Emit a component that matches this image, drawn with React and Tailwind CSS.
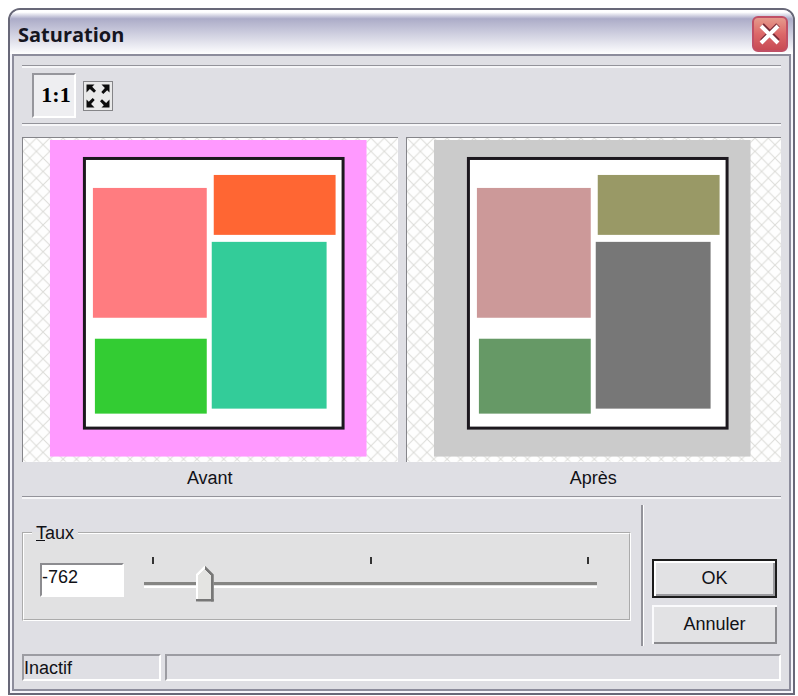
import React, { useState } from 'react';

const MIN_RATE = -1000;
const MAX_RATE = 1000;

const previews = [
  {
    label: 'Avant',
    colors: {
      page: '#ff99ff',
      topLeft: '#ff7c80',
      topRight: '#ff6633',
      bottomRight: '#33cc99',
      bottomLeft: '#33cc33',
    },
  },
  {
    label: 'Après',
    colors: {
      page: '#cbcbcb',
      topLeft: '#cc9999',
      topRight: '#999966',
      bottomRight: '#777777',
      bottomLeft: '#669966',
    },
  },
];

function Preview({ label, colors }) {
  const patternId = `hatch-${label}`;

  return (
    <figure className="min-w-0 flex-1">
      <div className="border-t border-l border-[#85858a] bg-white">
        <svg viewBox="0 0 375 324" className="block h-auto w-full" role="img" aria-label={label}>
          <defs>
            <pattern id={patternId} width="13.4" height="13.4" patternUnits="userSpaceOnUse">
              <path d="M0 0L13.4 13.4M13.4 0L0 13.4" stroke="#dcdcd8" strokeWidth="1" />
            </pattern>
          </defs>
          <rect width="375" height="324" fill="#fefefe" />
          <rect width="375" height="324" fill={`url(#${patternId})`} />
          <rect x="27" y="2" width="317" height="317" fill={colors.page} />
          <rect x="61.5" y="20.5" width="259" height="270" fill="#fff" stroke="#1c181e" strokeWidth="3" />
          <rect x="70" y="50" width="114" height="130" fill={colors.topLeft} />
          <rect x="191" y="37" width="122" height="60" fill={colors.topRight} />
          <rect x="189" y="104" width="115" height="167" fill={colors.bottomRight} />
          <rect x="72" y="201" width="112" height="75" fill={colors.bottomLeft} />
        </svg>
      </div>
      <figcaption className="pt-1 text-center leading-6">{label}</figcaption>
    </figure>
  );
}

function Rule() {
  return <div className="h-[3px] border-t border-[#93939a] bg-[#f6f6f8]" />;
}

export default function App() {
  const [rate, setRate] = useState(-762);
  const [actualSize, setActualSize] = useState(true);

  const handleTextChange = (e) => {
    const value = Number(e.target.value);
    if (!Number.isNaN(value)) {
      setRate(Math.max(MIN_RATE, Math.min(MAX_RATE, value)));
    }
  };

  return (
    <div className="min-h-screen bg-white pt-2 pr-[3px] pb-1 pl-2 font-['Liberation_Sans',sans-serif] text-lg text-[#111116]">
      <div className="overflow-hidden rounded-t-xl border-2 border-[#686878] bg-[#f4f4fa]">
        {/* Title bar */}
        <header className="flex h-11 items-center justify-between bg-linear-to-b from-white from-5% via-[#acacc8] via-20% to-white pt-1 pr-[5px] pl-2">
          <h1 className="pt-0.5 font-['Open_Sans',sans-serif] text-xl font-bold text-[#15151f]">Saturation</h1>
          <button
            type="button"
            aria-label="Fermer"
            className="flex size-9 items-center justify-center rounded-md border-2 border-[#bf5066] bg-linear-to-b from-[#e59a8c] via-[#dc6768] to-[#c84a54]"
          >
            <svg viewBox="0 0 24 24" className="size-6">
              <path d="M4 3L20 19M20 3L4 19" stroke="#7a2c38" strokeWidth="5" />
              <path d="M3 4L20 21M20 4L3 21" stroke="#fff" strokeWidth="4" />
            </svg>
          </button>
        </header>

        <div className="mx-0.5 mb-0.5 border-2 border-[#8d8d9c] bg-[#dfdfe4] px-2 pt-[9px] pb-2">
          {/* Toolbar */}
          <Rule />
          <div className="flex h-[55px] items-center gap-[7px] pl-[10px]">
            <button
              type="button"
              aria-pressed={actualSize}
              onClick={() => setActualSize(true)}
              className="h-[45px] w-11 border-2 border-t-[#96969c] border-r-white border-b-white border-l-[#96969c] bg-[#eeeef1] pl-1 font-['Liberation_Serif',serif] text-[22px] font-bold text-black"
            >
              1:1
            </button>
            <button
              type="button"
              aria-label="Ajuster"
              aria-pressed={!actualSize}
              onClick={() => setActualSize(false)}
              className="size-[30px] border border-[#858588] bg-[#e9e9e9]"
            >
              <svg viewBox="0 0 28 28" className="size-7" fill="#0c0c0c">
                <path id="arrow" d="M2.5 2.5h8L8.2 4.8l3.8 3.9-2 2-4.1-3.6-3.4 3.4z" />
                <use href="#arrow" transform="rotate(90 14 14)" />
                <use href="#arrow" transform="rotate(180 14 14)" />
                <use href="#arrow" transform="rotate(270 14 14)" />
              </svg>
            </button>
          </div>
          <Rule />

          {/* Before / after */}
          <div className="flex gap-2 pt-[11px] pb-1.5">
            {previews.map((preview) => (
              <Preview key={preview.label} {...preview} />
            ))}
          </div>
          <Rule />

          {/* Rate and actions */}
          <div className="flex pt-1.5 pr-1 pb-2">
            <fieldset className="mt-4 min-w-0 flex-1 self-start border-2 border-white bg-[#e1e1e2] pr-8 pb-4 pl-2 [border-style:groove]">
              <legend className="px-1 leading-6">
                <label htmlFor="rate">
                  <u>T</u>aux
                </label>
              </legend>
              <div className="flex items-start gap-5 pt-3 pl-2">
                <input
                  id="rate"
                  type="text"
                  value={rate}
                  onChange={handleTextChange}
                  className="mt-1.5 h-[34px] w-[84px] border-2 border-t-[#8c8c90] border-r-white border-b-white border-l-[#8c8c90] bg-white pb-1 outline-none"
                />
                <div className="min-w-0 flex-1">
                  <div className="flex h-2.5 justify-between px-2">
                    <span className="h-[7px] w-0.5 bg-[#333]" />
                    <span className="h-[7px] w-0.5 bg-[#333]" />
                    <span className="h-[7px] w-0.5 bg-[#333]" />
                  </div>
                  <input
                    type="range"
                    aria-label="Taux"
                    min={MIN_RATE}
                    max={MAX_RATE}
                    value={rate}
                    onChange={(e) => setRate(Number(e.target.value))}
                    className="block h-9 w-full appearance-none bg-transparent outline-none [&::-webkit-slider-runnable-track]:h-1.5 [&::-webkit-slider-runnable-track]:bg-[linear-gradient(#858583_0_3px,#e1e1e2_3px_4px,#fff_4px)] [&::-webkit-slider-thumb]:-mt-4 [&::-webkit-slider-thumb]:h-9 [&::-webkit-slider-thumb]:w-[18px] [&::-webkit-slider-thumb]:appearance-none [&::-webkit-slider-thumb]:bg-[linear-gradient(to_bottom_left,#777_0_70%,transparent_70%),linear-gradient(to_bottom_right,#fff_0_66%,transparent_66%),linear-gradient(#777,#777),linear-gradient(#777,#777),linear-gradient(#fff,#fff),linear-gradient(#e4e4e2,#e4e4e2)] [&::-webkit-slider-thumb]:[background-position:right_top,left_top,right_bottom,left_bottom,left_bottom,left_top] [&::-webkit-slider-thumb]:bg-no-repeat [&::-webkit-slider-thumb]:[background-size:9px_9px,9px_9px,3px_27px,18px_3px,2px_28px,18px_36px] [&::-webkit-slider-thumb]:[clip-path:polygon(50%_0,100%_25%,100%_100%,0_100%,0_25%)]"
                  />
                </div>
              </div>
            </fieldset>

            <div className="mr-2 ml-2.5 h-[141px] w-[3px] border-l-2 border-[#93939a] bg-white" />

            <div className="flex w-[125px] flex-col justify-end gap-[7px] pb-0.5">
              <button
                type="submit"
                className="h-[39px] border-2 border-[#1c1c1c] bg-[#e2e2e4] shadow-[inset_2px_2px_0_#fff,inset_-2px_-2px_0_#9a9a9e]"
              >
                OK
              </button>
              <button
                type="button"
                className="h-[39px] bg-[#e2e2e4] shadow-[inset_2px_2px_0_#fafafc,inset_-2px_-2px_0_#8a8a8e]"
              >
                Annuler
              </button>
            </div>
          </div>

          {/* Status bar */}
          <footer className="flex gap-1">
            <p className="h-[27px] w-[139px] border-2 border-t-[#9c9ca2] border-r-white border-b-white border-l-[#9c9ca2] leading-6">
              Inactif
            </p>
            <p className="h-[27px] flex-1 border-2 border-t-[#9c9ca2] border-r-white border-b-white border-l-[#9c9ca2]" />
          </footer>
        </div>
      </div>
    </div>
  );
}
